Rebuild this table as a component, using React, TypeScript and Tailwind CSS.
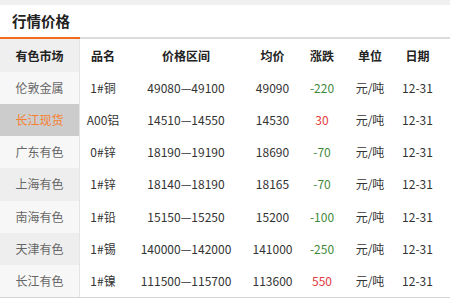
import React from "react";

const rows = [
  { m: "伦敦金属", n: "1#铜", r: "49080—49100", a: "49090", c: "-220" },
  { m: "长江现货", n: "A00铝", r: "14510—14550", a: "14530", c: "30", active: true },
  { m: "广东有色", n: "0#锌", r: "18190—19190", a: "18690", c: "-70" },
  { m: "上海有色", n: "1#锌", r: "18140—18190", a: "18165", c: "-70" },
  { m: "南海有色", n: "1#铅", r: "15150—15250", a: "15200", c: "-100" },
  { m: "天津有色", n: "1#锡", r: "140000—142000", a: "141000", c: "-250" },
  { m: "长江有色", n: "1#镍", r: "111500—115700", a: "113600", c: "550" },
];

export default function App() {
  return (
    <div
      className="w-[450px] h-[300px] bg-white overflow-hidden flex flex-col text-[#333]"
      style={{ fontFamily: '"Noto Sans CJK SC", "Noto Sans", sans-serif' }}
    >
      <div className="h-[5px] bg-[#f0f0f0]" />
      <div className="h-[32px] flex items-center pl-[12px] text-[14.5px] font-bold text-[#222]">
        行情价格
      </div>
      <div className="h-[2px] bg-[#dcdcdc] flex">
        <div className="w-[80px] bg-[#f26b1d]" />
      </div>
      <div className="flex h-[33px] text-[12px] font-bold text-[#222]">
        <div className="w-[80px] bg-[#efefef] border-r border-[#e4e4e4] flex items-center justify-center">
          有色市场
        </div>
        <div className="w-[46px] flex items-center justify-center">品名</div>
        <div className="w-[120px] flex items-center justify-center">价格区间</div>
        <div className="w-[53px] flex items-center justify-center">均价</div>
        <div className="w-[46px] flex items-center justify-center">涨跌</div>
        <div className="w-[50px] flex items-center justify-center">单位</div>
        <div className="w-[45px] flex items-center justify-center">日期</div>
      </div>
      <div className="h-[226px] flex flex-col border-b border-[#d4d4d4]">
        {rows.map((r, i) => {
          const neg = r.c.startsWith("-");
          return (
            <div key={i} className="flex-1 flex text-[12px]">
              <div
                className={
                  "w-[80px] border-r border-[#e4e4e4] flex items-center justify-center " +
                  (r.active
                    ? "bg-[#cccccc] text-[#f7802f]"
                    : i % 2 === 0
                    ? "bg-[#f7f7f7] text-[#666]"
                    : "bg-[#eeeeee] text-[#666]")
                }
              >
                {r.m}
              </div>
              <div className="w-[46px] flex items-center justify-center">{r.n}</div>
              <div className="w-[120px] flex items-center justify-center">{r.r}</div>
              <div className="w-[53px] flex items-center justify-center">{r.a}</div>
              <div
                className={
                  "w-[46px] flex items-center justify-center " +
                  (neg ? "text-[#3f8a3a]" : "text-[#e4393c]")
                }
              >
                {r.c}
              </div>
              <div className="w-[50px] flex items-center justify-center">元/吨</div>
              <div className="w-[45px] flex items-center justify-center">12-31</div>
            </div>
          );
        })}
      </div>
    </div>
  );
}
